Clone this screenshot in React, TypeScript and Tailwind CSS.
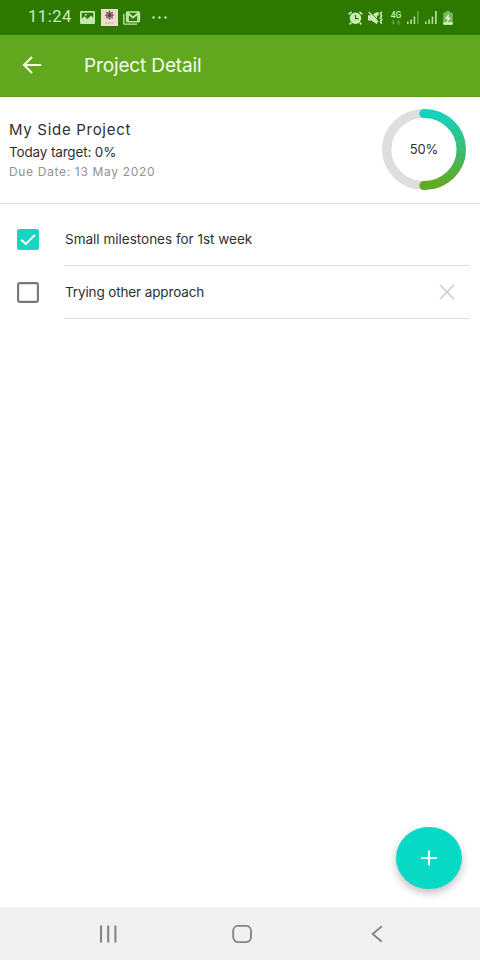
import { useState } from 'react';

interface Milestone {
  id: number;
  title: string;
  done: boolean;
}

const initialMilestones: Milestone[] = [
  { id: 1, title: 'Small milestones for 1st week', done: true },
  { id: 2, title: 'Trying other approach', done: false },
];

function SignalIcon({ weak = false }: { weak?: boolean }) {
  return (
    <svg viewBox="0 0 12 13" className="h-[13px] w-3" fill="#b5df9d">
      <rect x="0" y="10.5" width="1.6" height="2.5" />
      <rect x="3.3" y="8.5" width="1.6" height="4.5" />
      <rect x="6.6" y="5.5" width="1.6" height="7.5" />
      <rect x="10" y="0" width="1.7" height="13" opacity={weak ? 0.4 : 1} />
    </svg>
  );
}

function StatusBar() {
  return (
    <div className="flex h-[35px] shrink-0 items-center bg-[#2d7900] pl-[28px] pr-[27px] text-[#c9efb5]">
      <span className="w-[52px] font-[Roboto,sans-serif] text-[16.5px] leading-none tracking-[0.55px]">11:24</span>

      {/* Gallery */}
      <svg viewBox="0 0 15 13" className="h-[13px] w-[15px]">
        <path
          fillRule="evenodd"
          fill="#c0e9ab"
          d="M1.2 0h12.6Q15 0 15 1.2v10.6q0 1.2-1.2 1.2H1.2Q0 13 0 11.8V1.2Q0 0 1.2 0ZM1.7 1.7v6.1l2.6-2.5 3.2 2.6 3.4-3.3 2.4 2.2V1.7Z"
        />
        <circle cx="5.8" cy="3.8" r="1" fill="#c0e9ab" />
      </svg>

      {/* App notification */}
      <svg viewBox="0 0 17 17" className="ml-[6px] h-[17px] w-[17px]">
        <rect width="17" height="17" fill="#eddfc9" />
        <g stroke="#75585c" strokeWidth="1.1">
          <path d="M8.5 1.6v9.2M3.9 6.2h9.2M5.3 3l6.4 6.4M11.7 3 5.3 9.4" />
          <circle cx="8.5" cy="6.2" r="1.9" fill="#5b4047" stroke="none" />
          <circle cx="8.5" cy="6.2" r="3.3" fill="none" strokeWidth=".7" />
        </g>
        <path d="M4 14h9" stroke="#d3b8aa" strokeWidth="1.3" strokeDasharray="1.5 .7" />
      </svg>

      {/* Mail */}
      <svg viewBox="0 0 18 14" className="ml-[5px] h-[14px] w-[18px]" fill="none" stroke="#c0e9ab">
        <path d="M.8 3v9.2q0 1 1 1H14" strokeWidth="1.3" />
        <rect x="3.6" y=".9" width="12.8" height="9.8" rx="1" strokeWidth="1.5" />
        <path d="M5 10.5V2.2l5 4.3 5-4.3v8.3" strokeWidth="1.8" />
      </svg>

      <svg viewBox="0 0 16 3" className="ml-[11px] h-[3px] w-4" fill="#c0e9ab">
        <circle cx="1.5" cy="1.5" r="1.2" />
        <circle cx="7.5" cy="1.5" r="1.2" />
        <circle cx="13.5" cy="1.5" r="1.2" />
      </svg>

      {/* Alarm */}
      <svg viewBox="0 0 15 14" className="ml-auto h-[14px] w-[15px]">
        <g stroke="#c9edb5" strokeWidth="1.7" fill="none">
          <path d="M.6 3.3 3.6.9M14.4 3.3 11.4.9M3.2 11.5 1.7 13.4M11.8 11.5l1.5 1.9" />
        </g>
        <circle cx="7.5" cy="7.3" r="5.7" fill="#c9edb5" />
        <path d="M7.5 4v3.7h3" fill="none" stroke="#2d7900" strokeWidth="1.2" />
      </svg>

      {/* Muted, vibrating */}
      <svg viewBox="0 0 16 14" className="ml-[5px] h-[14px] w-4">
        <path d="M0 4.3h3.2L9 1v12.2L3.2 9.5H0Z" fill="#c9edb5" />
        <path d="M2 .8 10 9.2" stroke="#2d7900" strokeWidth=".9" />
        <path d="M.8 1 10 11.3" stroke="#c9edb5" strokeWidth="1.5" />
        <path
          d="m10.4 1.3-1 1.7 1 1.6M13.8.8l-1.5 2 1.5 2-1.5 2 1.5 2-1.5 2 1.5 2"
          fill="none"
          stroke="#c9edb5"
          strokeWidth="1.5"
        />
      </svg>

      <div className="ml-[6px] flex w-[12px] flex-col items-center">
        <span className="font-[Roboto,sans-serif] text-[8.5px] font-medium leading-[9px]">4G</span>
        <svg viewBox="0 0 10 5" className="h-[5px] w-[10px]" fill="#5d9b3c">
          <path d="M1.5 0h1.6v2.2h1.4L2.3 5 .1 2.2h1.4ZM6.9 5h1.6V2.8h1.4L7.7 0 5.5 2.8h1.4Z" />
        </svg>
      </div>

      <div className="ml-[5px] flex gap-[6px]">
        <SignalIcon weak />
        <SignalIcon />
      </div>

      {/* Battery */}
      <svg viewBox="0 0 10 14" className="ml-[6px] h-[14px] w-[10px]">
        <path d="M3 0h4v1.4h2q.8 0 .8.8V13q0 .8-.8.8H1q-.8 0-.8-.8V2.2q0-.8.8-.8h2Z" fill="#7db565" />
        <path d="M.2 11.2h9.6V13q0 .8-.8.8H1q-.8 0-.8-.8Z" fill="#d5f2c5" />
        <path d="M6 2.5 2 7.8h2.6l-.8 4L8 6.5H5.4Z" fill="#e4f8d9" />
      </svg>
    </div>
  );
}

function AppBar() {
  return (
    <header className="flex h-[62px] shrink-0 items-center border-b border-[#579c1b] bg-[#62a81f] pl-[22px] text-[#f4fcea]">
      <svg viewBox="0 0 20 18" className="mt-[-2px] h-[18px] w-5" fill="none" stroke="currentColor" strokeWidth="2.1">
        <path d="M19.2 9H2M10 1 2 9l8 8" />
      </svg>
      <h1 className="ml-[42px] text-[19px] leading-6 tracking-[-0.14px]">Project Detail</h1>
    </header>
  );
}

function ProgressRing({ percent }: { percent: number }) {
  return (
    <div className="grid h-[81px] w-[84px] place-items-center">
      <svg viewBox="0 0 84 84" preserveAspectRatio="none" className="col-start-1 row-start-1 h-[81px] w-[84px]" fill="none">
        <defs>
          <linearGradient id="ring" x1="0" y1="0" x2="0" y2="84" gradientUnits="userSpaceOnUse">
            <stop offset="0.08" stopColor="#17d1bc" />
            <stop offset="0.5" stopColor="#39bd73" />
            <stop offset="0.9" stopColor="#60ab25" />
          </linearGradient>
        </defs>
        <circle cx="42" cy="42" r="37.3" stroke="#dedede" strokeWidth="9.4" />
        {/* starts at twelve o'clock and runs clockwise */}
        <path
          d="M42 4.7a37.3 37.3 0 0 1 0 74.6a37.3 37.3 0 0 1 0-74.6"
          stroke="url(#ring)"
          strokeWidth="9.4"
          strokeLinecap="round"
          pathLength="100"
          strokeDasharray={`${percent} 100`}
        />
      </svg>
      <span className="col-start-1 row-start-1 text-[13px] tracking-[-0.1px] text-[#303030]">{percent}%</span>
    </div>
  );
}

interface MilestoneRowProps {
  milestone: Milestone;
  onToggle: () => void;
  onRemove: () => void;
}

function MilestoneRow({ milestone, onToggle, onRemove }: MilestoneRowProps) {
  return (
    <li className="flex h-[53px] pl-[17px] pr-[10px]">
      <button onClick={onToggle} aria-label={milestone.title} className="mr-[26px] flex w-[22px] items-center">
        {milestone.done ? (
          <svg viewBox="0 0 22 21" className="h-[21px] w-[22px]">
            <rect width="22" height="21" rx="2" fill="#1bd3c0" />
            <path d="m4.2 10.7 4.6 4.2 9.2-9" fill="none" stroke="#fff" strokeWidth="2" />
          </svg>
        ) : (
          <svg viewBox="0 0 22 21" className="h-[21px] w-[22px]">
            <rect x="1.1" y="1.1" width="19.8" height="18.8" rx="1.4" fill="none" stroke="#777" strokeWidth="2.1" />
          </svg>
        )}
      </button>
      <div className="flex flex-1 items-center justify-between border-b border-[#dcdcdc] pr-[15px]">
        <span className={milestone.done ? 'text-[13.5px] text-[#303030]' : 'text-[13.5px] tracking-[-0.13px] text-[#303030]'}>
          {milestone.title}
        </span>
        {!milestone.done && (
          <button onClick={onRemove} aria-label="Remove">
            <svg viewBox="0 0 16 16" className="h-4 w-4" stroke="#d6d6d6" strokeWidth="1.9">
              <path d="m1 1 14 14M15 1 1 15" />
            </svg>
          </button>
        )}
      </div>
    </li>
  );
}

function NavigationBar() {
  return (
    <nav className="flex h-[53px] shrink-0 items-center bg-[#f1f1f1] pl-[99px]">
      <svg viewBox="0 0 18 18" className="h-[18px] w-[18px]" stroke="#858585" strokeWidth="2.1">
        <path d="M2 .5v17M9.2.5v17M16.4.5v17" />
      </svg>
      <svg viewBox="0 0 20 18" className="ml-[115px] h-[18px] w-5" fill="none" stroke="#858585" strokeWidth="1.9">
        <rect x="1.2" y=".9" width="17.8" height="16.2" rx="5" />
      </svg>
      <svg viewBox="0 0 12 18" className="ml-[119px] h-[18px] w-3" fill="none" stroke="#858585" strokeWidth="1.9">
        <path d="M10.8 1.2 1.7 9l9.1 7.8" />
      </svg>
    </nav>
  );
}

export default function App() {
  const [milestones, setMilestones] = useState(initialMilestones);

  const toggle = (id: number) =>
    setMilestones((items) => items.map((m) => (m.id === id ? { ...m, done: !m.done } : m)));
  const remove = (id: number) => setMilestones((items) => items.filter((m) => m.id !== id));

  const percent = milestones.length
    ? Math.round((milestones.filter((m) => m.done).length / milestones.length) * 100)
    : 0;

  return (
    <div className="flex h-[960px] w-[480px] flex-col overflow-hidden bg-white font-[Inter,sans-serif]">
      <StatusBar />
      <AppBar />
      <main className="relative flex-1">
        <section className="flex h-[107px] justify-between border-b border-[#dcdcdc] pl-[9px] pr-[14px] pt-[12px]">
          <div className="pt-[11px]">
            <h2 className="text-[15px] leading-5 tracking-[0.7px] text-[#303030]">My Side Project</h2>
            <p className="mt-[2px] text-[13.5px] leading-5 tracking-[-0.15px] text-[#303030]">Today target: 0%</p>
            <p className="mt-px text-[12px] leading-[18px] tracking-[0.67px] text-[#929292]">Due Date: 13 May 2020</p>
          </div>
          <ProgressRing percent={percent} />
        </section>

        <ul className="pt-[9px]">
          {milestones.map((m) => (
            <MilestoneRow key={m.id} milestone={m} onToggle={() => toggle(m.id)} onRemove={() => remove(m.id)} />
          ))}
        </ul>

        {/* Floating add button */}
        <button
          aria-label="Add milestone"
          className="absolute bottom-[18px] right-[18px] flex h-[62px] w-[66px] items-center justify-center rounded-[50%] bg-[#07d9c5] shadow-[0_4px_9px_rgba(0,0,0,0.25)]"
        >
          <svg viewBox="0 0 16 16" className="h-4 w-4" stroke="#eafffa" strokeWidth="2.1">
            <path d="M8 .5v15M0 8h16" />
          </svg>
        </button>
      </main>
      <NavigationBar />
    </div>
  );
}
